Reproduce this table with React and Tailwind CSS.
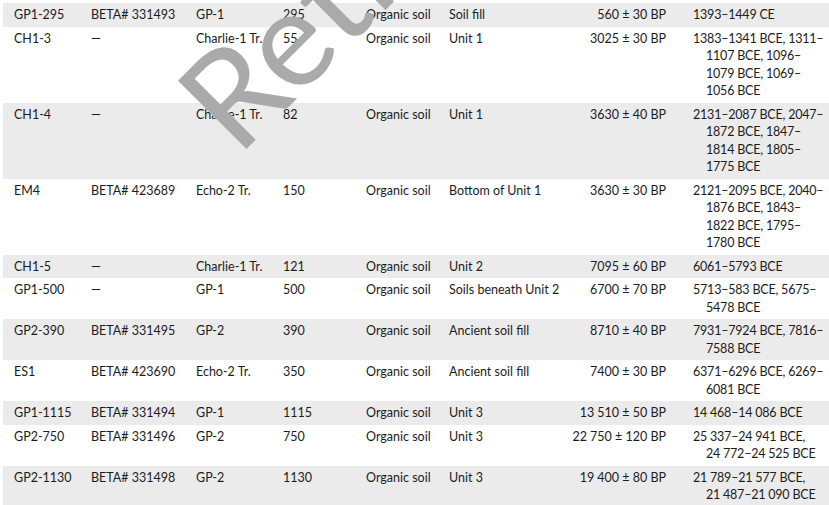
const T = "\u202f";

// last column keeps the source's line breaks; wrapped lines hang under the first
const rows = [
  ["GP1-295", "BETA# 331493", "GP-1", "295", "Organic soil", "Soil fill", "560 ± 30 BP", ["1393–1449 CE"]],
  ["CH1-3", "—", "Charlie-1 Tr.", "55", "Organic soil", "Unit 1", "3025 ± 30 BP", ["1383–1341 BCE, 1311–", "1107 BCE, 1096–", "1079 BCE, 1069–", "1056 BCE"]],
  ["CH1-4", "—", "Charlie-1 Tr.", "82", "Organic soil", "Unit 1", "3630 ± 40 BP", ["2131–2087 BCE, 2047–", "1872 BCE, 1847–", "1814 BCE, 1805–", "1775 BCE"]],
  ["EM4", "BETA# 423689", "Echo-2 Tr.", "150", "Organic soil", "Bottom of Unit 1", "3630 ± 30 BP", ["2121–2095 BCE, 2040–", "1876 BCE, 1843–", "1822 BCE, 1795–", "1780 BCE"]],
  ["CH1-5", "—", "Charlie-1 Tr.", "121", "Organic soil", "Unit 2", "7095 ± 60 BP", ["6061–5793 BCE"]],
  ["GP1-500", "—", "GP-1", "500", "Organic soil", "Soils beneath Unit 2", "6700 ± 70 BP", ["5713–583 BCE, 5675–", "5478 BCE"]],
  ["GP2-390", "BETA# 331495", "GP-2", "390", "Organic soil", "Ancient soil fill", "8710 ± 40 BP", ["7931–7924 BCE, 7816–", "7588 BCE"]],
  ["ES1", "BETA# 423690", "Echo-2 Tr.", "350", "Organic soil", "Ancient soil fill", "7400 ± 30 BP", ["6371–6296 BCE, 6269–", "6081 BCE"]],
  ["GP1-1115", "BETA# 331494", "GP-1", "1115", "Organic soil", "Unit 3", `13${T}510 ± 50 BP`, [`14${T}468–14${T}086 BCE`]],
  ["GP2-750", "BETA# 331496", "GP-2", "750", "Organic soil", "Unit 3", `22${T}750 ± 120 BP`, [`25${T}337–24${T}941 BCE,`, `24${T}772–24${T}525 BCE`]],
  ["GP2-1130", "BETA# 331498", "GP-2", "1130", "Organic soil", "Unit 3", `19${T}400 ± 80 BP`, [`21${T}789–21${T}577 BCE,`, `21${T}487–21${T}090 BCE`]],
];

export default function App() {
  return (
    <div
      className="relative w-[829px] h-[505px] overflow-hidden bg-white pt-[3px] pl-[3px] text-[12.5px] leading-[17.5px] text-[#1c1c1c]"
      style={{ fontFamily: "Lato, 'Liberation Sans', sans-serif" }}
    >
      {rows.map((r, i) => (
        <div
          key={i}
          className={
            "grid grid-cols-[77px_105px_87px_83px_83px_121px_96px_1fr] pl-[11px] py-[3px] " +
            (i % 2 === 0 ? "bg-[#ebebeb]" : "bg-white")
          }
        >
          <div>{r[0]}</div>
          <div>{r[1]}</div>
          <div>{r[2]}</div>
          <div>{r[3]}</div>
          <div>{r[4]}</div>
          <div>{r[5]}</div>
          <div className="text-right whitespace-nowrap">{r[6]}</div>
          <div className="pl-[27px] whitespace-nowrap tracking-[-0.2px]">
            {r[7].map((line, j) => (
              <div key={j} className={j > 0 ? "pl-[13px]" : ""}>
                {line}
              </div>
            ))}
          </div>
        </div>
      ))}
      <div className="pointer-events-none absolute left-[249px] top-[169px] h-0 w-0">
        <span
          className="absolute left-0 bottom-0 origin-bottom-left -rotate-45 whitespace-nowrap text-[135px] leading-none text-[#aaaaaa]"
          style={{ fontFamily: "Lato, 'Liberation Sans', sans-serif" }}
        >
          Retracted
        </span>
      </div>
    </div>
  );
}
